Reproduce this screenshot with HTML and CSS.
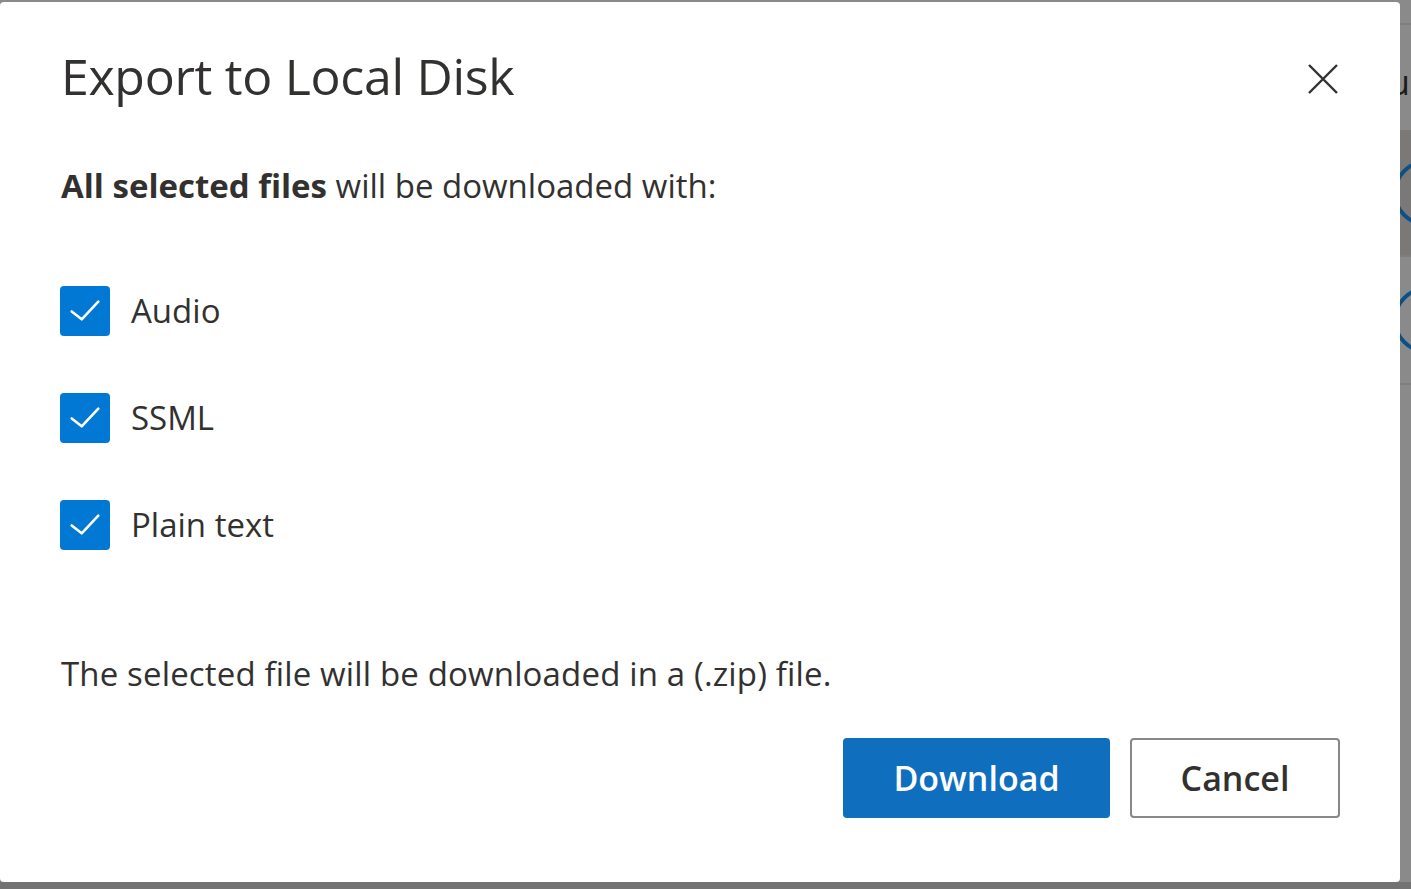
FILE: index.html
```html
<!DOCTYPE html>
<html lang="en">
<head>
<meta charset="utf-8">
<title>Export to Local Disk</title>
<link rel="stylesheet" href="styles.css">
</head>
<body>
<div class="page">
  <div class="page-side">
    <div class="side-top"></div>
    <div class="side-title">u</div>
    <div class="side-row side-row-dark"><span class="ring"></span></div>
    <div class="side-row"><span class="ring"></span></div>
  </div>
</div>
<div class="dialog" role="dialog" aria-labelledby="dlg-title">
  <div class="dialog-header">
    <h1 id="dlg-title" class="dialog-title">Export to Local Disk</h1>
    <button class="close-btn" aria-label="Close">
      <svg width="32" height="32" viewBox="0 0 32 32"><path d="M2 2 L30 30 M30 2 L2 30" stroke="#323130" stroke-width="2.4" fill="none"/></svg>
    </button>
  </div>
  <p class="intro"><b>All selected files</b> will be downloaded with:</p>
  <div class="options">
    <label class="option"><span class="box"><svg width="50" height="50" viewBox="0 0 50 50"><path d="M11.7 25.5 L21.7 33.3 L38.3 15.7" stroke="#fff" stroke-width="2.6" fill="none" stroke-linecap="round" stroke-linejoin="round"/></svg></span><span class="opt-label">Audio</span></label>
    <label class="option"><span class="box"><svg width="50" height="50" viewBox="0 0 50 50"><path d="M11.7 25.5 L21.7 33.3 L38.3 15.7" stroke="#fff" stroke-width="2.6" fill="none" stroke-linecap="round" stroke-linejoin="round"/></svg></span><span class="opt-label">SSML</span></label>
    <label class="option"><span class="box"><svg width="50" height="50" viewBox="0 0 50 50"><path d="M11.7 25.5 L21.7 33.3 L38.3 15.7" stroke="#fff" stroke-width="2.6" fill="none" stroke-linecap="round" stroke-linejoin="round"/></svg></span><span class="opt-label">Plain text</span></label>
  </div>
  <p class="note">The selected file will be downloaded in a (.zip) file.</p>
  <div class="dialog-footer">
    <button class="btn btn-primary">Download</button>
    <button class="btn btn-default">Cancel</button>
  </div>
</div>
</body>
</html>
```

FILE: styles.css
```css
* { box-sizing: border-box; }
html, body { margin: 0; padding: 0; }
body {
  width: 1411px;
  height: 889px;
  overflow: hidden;
  background: #737373;
  font-family: "Open Sans", "Noto Sans", sans-serif;
  color: #323130;
  position: relative;
}
.page {
  height: 882px;
  background: #8a8a8a;
  display: flex;
  justify-content: flex-end;
}
.page-side {
  width: 20px;
  display: flex;
  flex-direction: column;
}
.side-top {
  height: 25px;
  border-bottom: 2px solid #7e7e7e;
}
.side-title {
  height: 105px;
  padding-top: 40px;
  font-size: 34px;
  line-height: 34px;
  color: #1b1b1b;
  margin-left: -2px;
}
.side-row {
  height: 128px;
  position: relative;
  overflow: hidden;
  border-bottom: 2px solid #7e7e7e;
}
.side-row-dark { background: #7b7977; height: 127px; }
.ring {
  position: absolute;
  left: 2px;
  top: 30px;
  width: 66px;
  height: 66px;
  border: 4px solid #0b4f86;
  border-radius: 50%;
}
.dialog {
  position: absolute;
  left: 0;
  top: 2px;
  width: 1400px;
  height: 880px;
  background: #fff;
  border-radius: 4px;
  padding: 42px 61px 0 61px;
}
.dialog-header {
  display: flex;
  justify-content: space-between;
  align-items: flex-start;
}
.dialog-title {
  margin: 0;
  font-size: 50px;
  line-height: 64px;
  font-weight: 400;
  letter-spacing: -0.3px;
  color: #323130;
}
.close-btn {
  background: none;
  border: 0;
  padding: 0;
  margin-top: 19px;
  width: 32px;
  height: 32px;
  display: flex;
}
.intro {
  margin: 56px 0 0 0;
  font-size: 33px;
  line-height: 44px;
  color: #323130;
}
.intro b { font-weight: 700; }
.options {
  display: flex;
  flex-direction: column;
  gap: 57px;
  margin-top: 78px;
}
.option {
  display: flex;
  align-items: center;
  gap: 21px;
  height: 50px;
}
.box {
  width: 50px;
  height: 50px;
  background: #0078d4;
  border-radius: 4px;
  display: flex;
  margin-left: -1px;
}
.opt-label {
  font-size: 33px;
  line-height: 50px;
  color: #323130;
}
.note {
  margin: 102px 0 0 0;
  font-size: 33px;
  letter-spacing: 0.15px;
  line-height: 44px;
  color: #323130;
}
.dialog-footer {
  display: flex;
  justify-content: flex-end;
  gap: 20px;
  margin-top: 42px;
  margin-right: -1px;
}
.btn {
  height: 80px;
  border-radius: 4px;
  font-family: inherit;
  font-size: 34px;
  font-weight: 600;
  padding: 0;
}
.btn-primary {
  width: 267px;
  background: #106ebe;
  border: 0;
  color: #fff;
}
.btn-default {
  width: 210px;
  background: #fff;
  border: 2px solid #8a8886;
  color: #323130;
}
```
